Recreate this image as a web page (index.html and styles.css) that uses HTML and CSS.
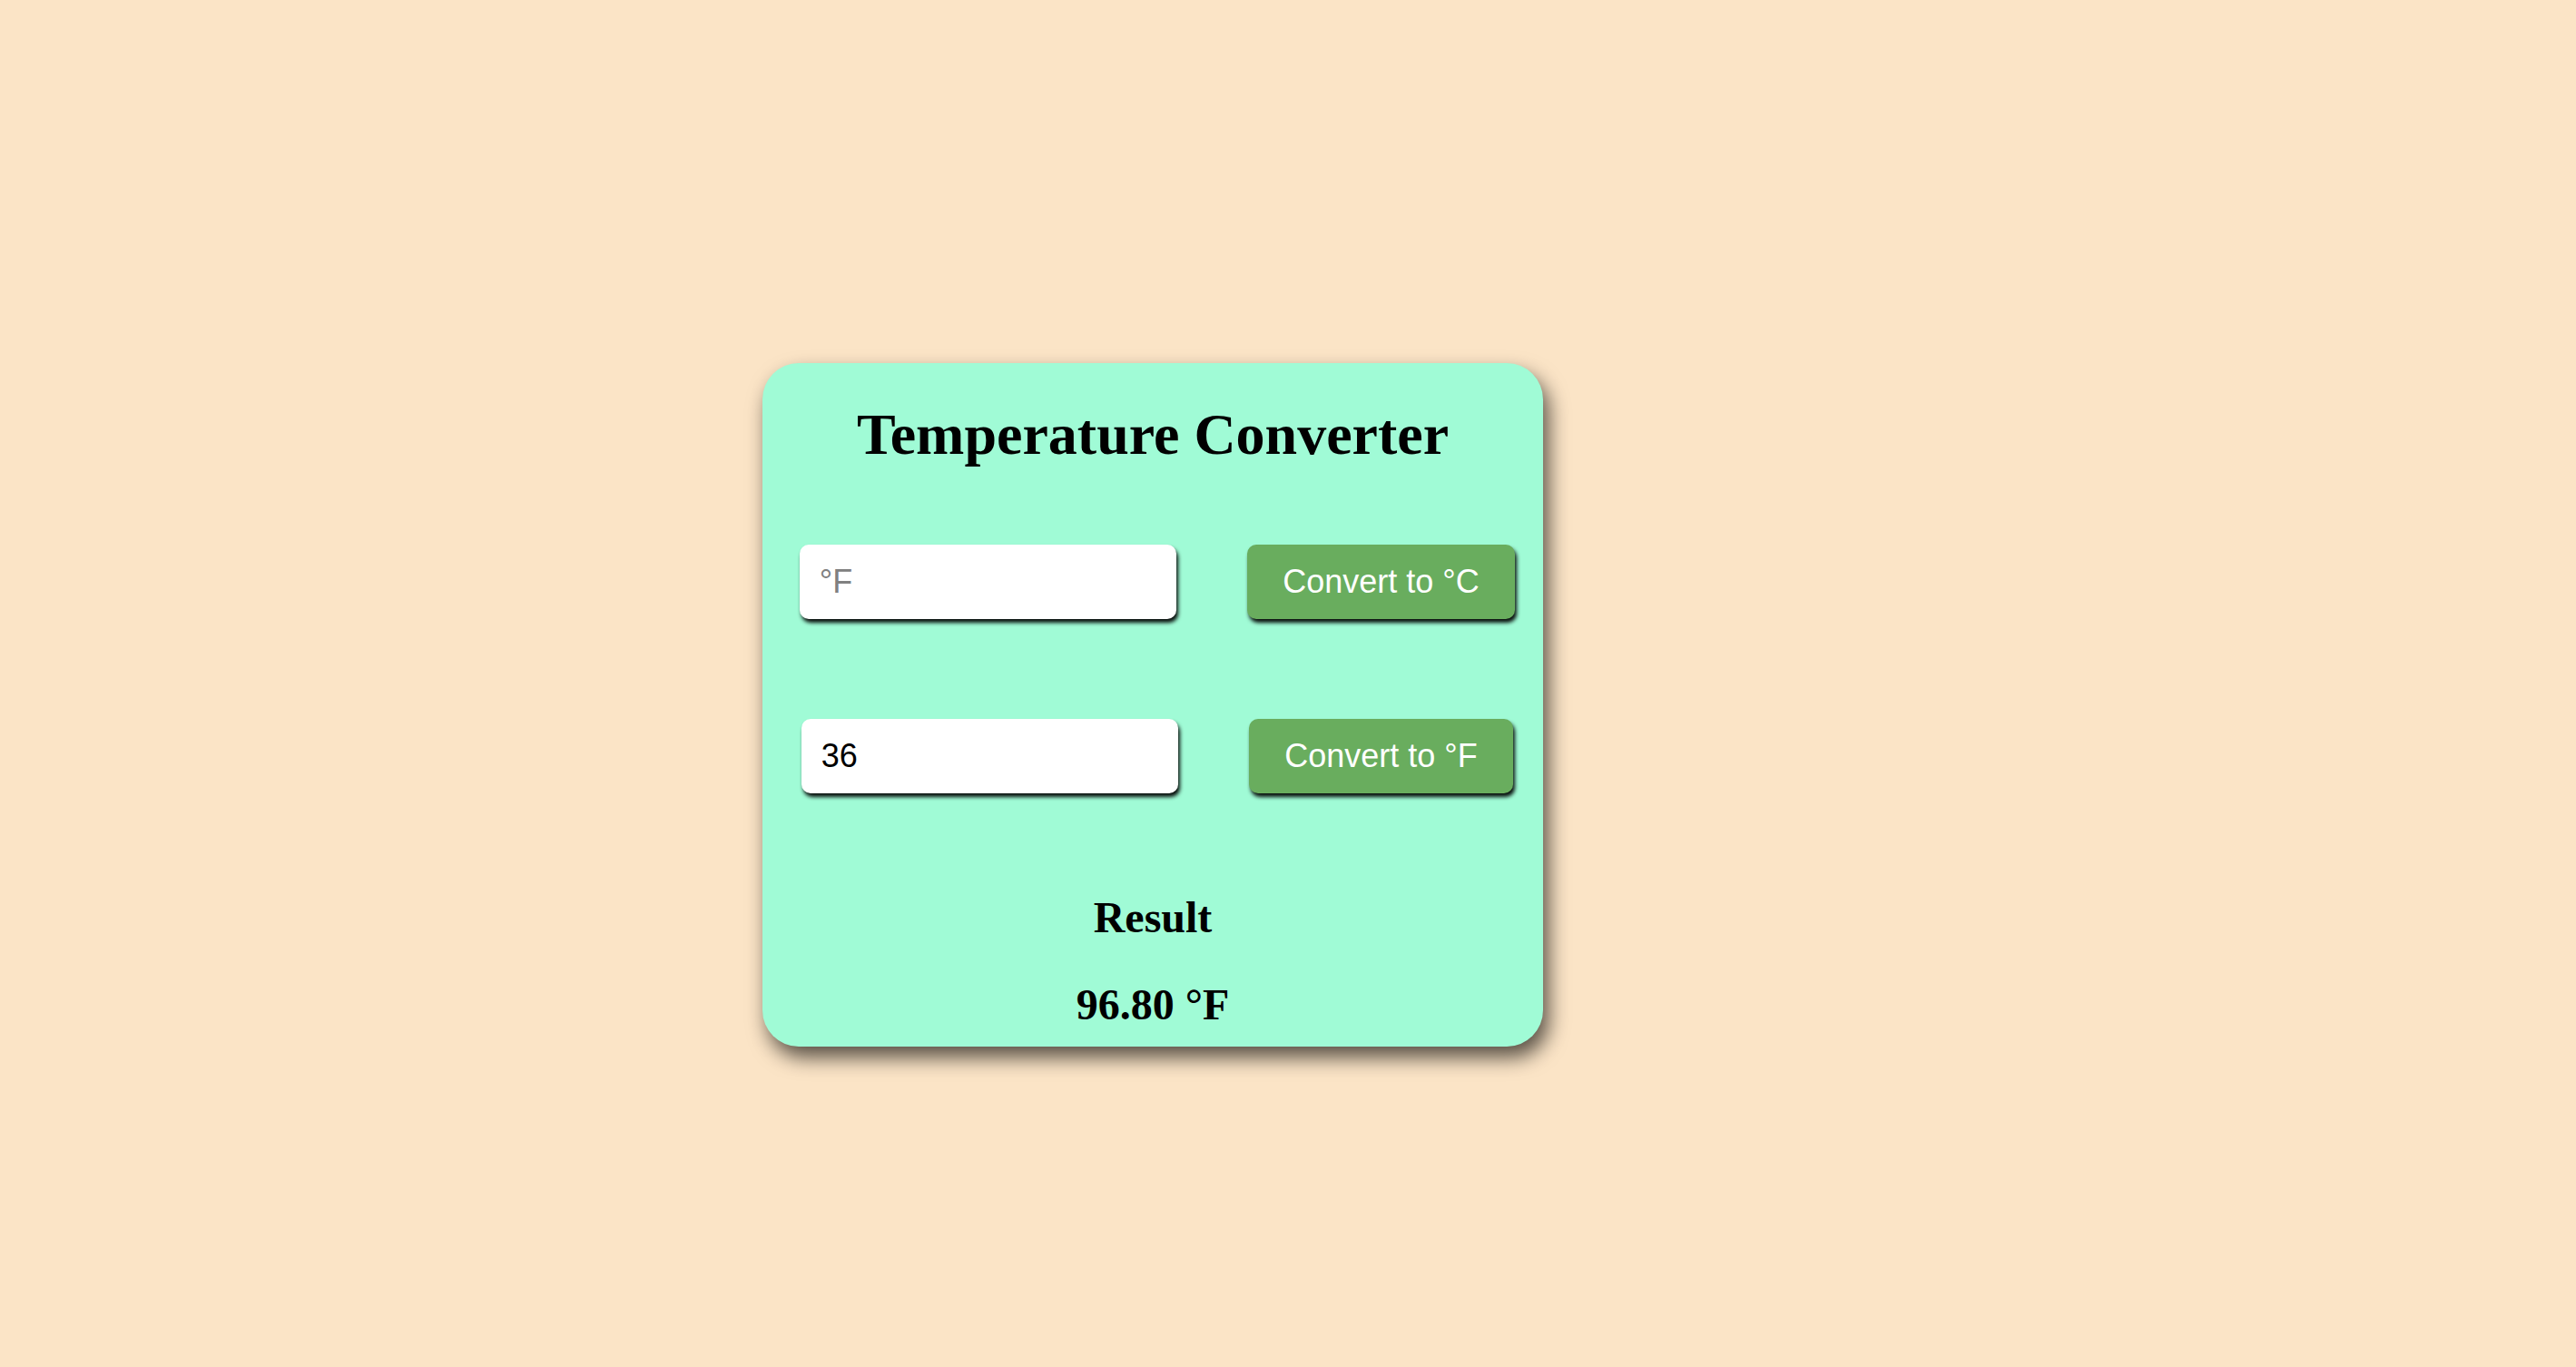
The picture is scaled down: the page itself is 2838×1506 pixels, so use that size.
FILE: index.html
```html
<!DOCTYPE html>
<html>
<head>
<meta charset="utf-8">
<title>Temperature Converter</title>
<link rel="stylesheet" href="styles.css">
</head>
<body>
<div class="card">
  <h1 class="title">Temperature Converter</h1>
  <div class="row row-first">
    <input class="field" type="text" placeholder="°F">
    <button class="btn">Convert to °C</button>
  </div>
  <div class="row row-second">
    <input class="field" type="text" value="36">
    <button class="btn">Convert to °F</button>
  </div>
  <h2 class="result-label">Result</h2>
  <h2 class="result-value">96.80 °F</h2>
</div>
</body>
</html>
```
FILE: styles.css
```css
html, body {
  margin: 0;
  padding: 0;
  background: #fbe4c6;
}
body {
  padding-top: 400px;
  height: 1106px;
  overflow: hidden;
}
.card {
  margin-left: 840px;
  width: 860px;
  box-sizing: border-box;
  padding: 42px 0 18px;
  background: #a0fbd6;
  border-radius: 40px;
  box-shadow: 6px 12px 22px rgba(0, 0, 0, 0.65);
  font-family: "Liberation Serif", "Times New Roman", serif;
  text-align: center;
}
.title {
  margin: 0;
  font-size: 64px;
  line-height: 74px;
  font-weight: bold;
  color: #000;
}
.row {
  display: flex;
  justify-content: center;
  align-items: flex-start;
  gap: 78px;
  padding-left: 10px;
}
.row-first {
  margin-top: 84px;
}
.row-second {
  margin-top: 110px;
}
.field {
  width: 415px;
  height: 82px;
  box-sizing: border-box;
  border: none;
  border-radius: 10px;
  padding: 0 22px;
  background: #fff;
  font-family: "Liberation Sans", Arial, sans-serif;
  font-size: 36px;
  color: #000;
  outline: none;
  box-shadow: 2px 4px 4px rgba(0, 0, 0, 0.95);
}
.field::placeholder {
  color: #808080;
}
.btn {
  height: 82px;
  box-sizing: border-box;
  border: none;
  border-radius: 10px;
  padding: 0 39.5px;
  background: #69ad5e;
  color: #fff;
  font-family: "Liberation Sans", Arial, sans-serif;
  font-size: 36px;
  box-shadow: 2px 4px 4px rgba(0, 0, 0, 0.95);
}
.result-label,
.result-value {
  margin: 0;
  font-size: 48px;
  line-height: 56px;
  font-weight: bold;
  color: #000;
}
.result-label {
  margin-top: 109px;
}
.result-value {
  margin-top: 40px;
}
```
